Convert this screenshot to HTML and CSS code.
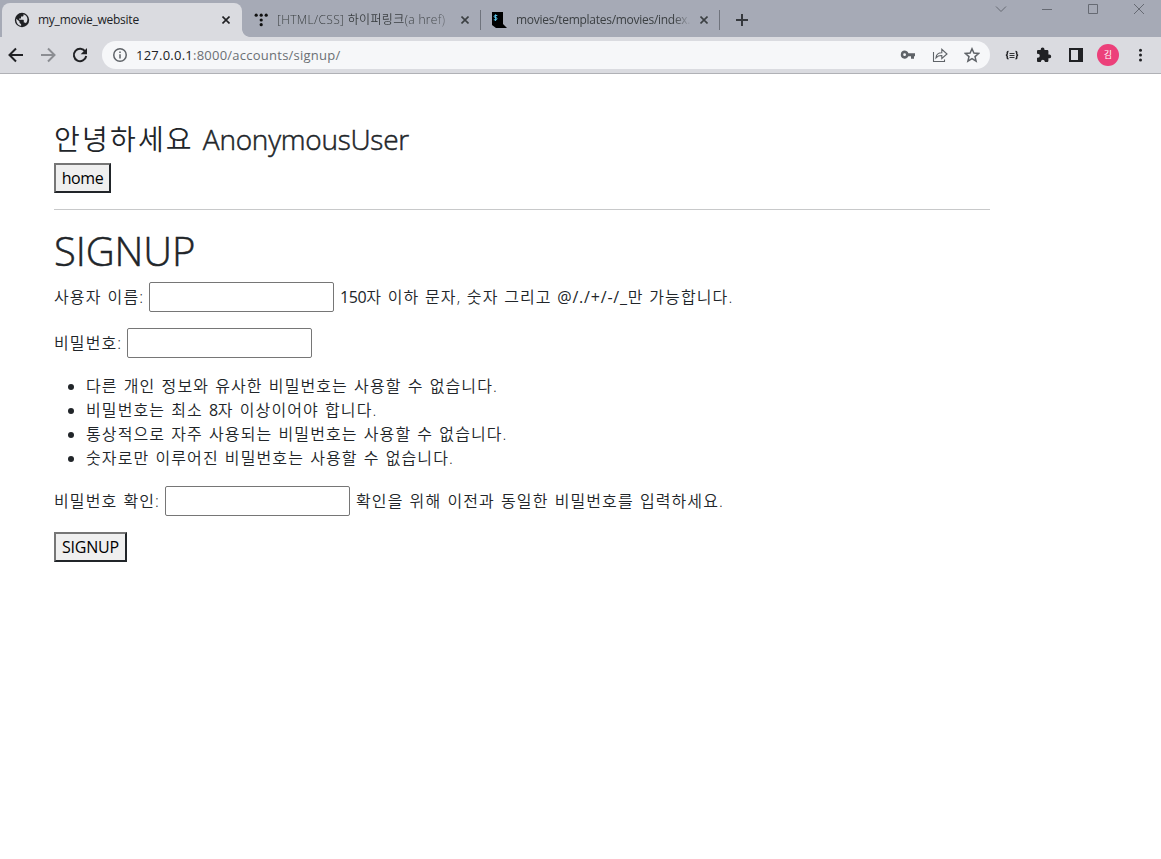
FILE: index.html
```
<!DOCTYPE html>
<html lang="ko">
<head>
<meta charset="utf-8">
<title>my_movie_website</title>
<link rel="stylesheet" href="styles.css">
</head>
<body>
<header class="browser">
  <div class="tabstrip">
    <div class="tab tab-active">
      <svg class="favicon" viewBox="0 0 16 16"><circle cx="8" cy="8" r="7.2" fill="#202124"/><path d="M2.3 6.8 5.5 9.6v1.1l1.6 1.5v1.7C4.1 13.500 2 11 2.300 6.800zM9.500 2.200v1.200c0 .7-.6 1.200-1.300 1.200H7v1.300c0 .4-.3.600-.6.600H5.200v1.300h3.900c.4 0 .7.300.7.700v1.900h.7c.6 0 1.100.4 1.300.9 2.700-2.900 2.200-7.700-2.300-9.100z" fill="#dadbe0"/></svg>
      <span class="tab-title">my_movie_website</span>
      <svg class="close" viewBox="0 0 8 8"><path d="M.5.5l7 7M7.500.5l-7 7"/></svg>
    </div>
    <div class="tab tab-second">
      <svg class="favicon" viewBox="0 0 16 16" fill="#111"><circle cx="2.200" cy="3.200" r="1.600"/><circle cx="7.200" cy="3.200" r="1.600"/><circle cx="12.200" cy="3.200" r="1.600"/><circle cx="7.200" cy="8" r="1.600"/><circle cx="7.200" cy="12.700" r="1.600"/></svg>
      <span class="tab-title fade title-ko">[HTML/CSS] 하이퍼링크(a href)</span>
      <svg class="close" viewBox="0 0 8 8"><path d="M.5.5l7 7M7.500.5l-7 7"/></svg>
    </div>
    <i class="divider"></i>
    <div class="tab tab-third">
      <svg class="favicon" viewBox="0 0 16 16"><path d="M1 0h11v12l4 4H5l-4-3z" fill="#000"/><path d="M6.300 3.500H4c-1.200 0-1.200 2 0 2h1c1.300 0 1.300 2.300 0 2.300H2.800M4.600 2.300v6.700" fill="none" stroke="#5cc3e8" stroke-width="1"/></svg>
      <span class="tab-title fade title-path">movies/templates/movies/index.</span>
      <svg class="close" viewBox="0 0 8 8"><path d="M.5.5l7 7M7.500.5l-7 7"/></svg>
    </div>
    <i class="divider"></i>
    <svg class="newtab" viewBox="0 0 12 12"><path d="M6 0v12M0 6h12"/></svg>
    <div class="window-controls">
      <svg viewBox="0 0 12 12"><path d="M1 3.500l5 5 5-5"/></svg>
      <svg viewBox="0 0 12 12"><path d="M1 6.500h10"/></svg>
      <svg viewBox="0 0 12 12"><path d="M1.500 1.500h9v9h-9z"/></svg>
      <svg viewBox="0 0 12 12"><path d="M1 1l10 10M11 1L1 11"/></svg>
    </div>
  </div>
  <div class="toolbar">
    <svg class="nav" viewBox="0 0 16 16"><path d="M15 8H2M8 1.500L1.500 8 8 14.500"/></svg>
    <svg class="nav nav-off" viewBox="0 0 16 16"><path d="M1 8h13M8 1.500L14.500 8 8 14.500"/></svg>
    <svg class="nav" viewBox="0 0 16 16"><path d="M13.300 4.600A6.200 6.200 0 1 0 14.200 9"/><path d="M15 1v6.300H8.700z" fill="#202124" stroke="none"/></svg>
    <div class="omnibox">
      <svg class="info" viewBox="0 0 14 14"><circle cx="7" cy="7" r="6.250"/><path d="M7 6.200v4.300M7 3.500v1.500"/></svg>
      <span class="url"><b>127.0.0.1</b>:8000/accounts/signup/</span>
      <svg class="action" viewBox="0 0 16 16"><path fill="#5f6368" fill-rule="evenodd" d="M4.600 3.600c1.700 0 3.200 1.100 3.800 2.700H15v3h-1v2.500h-3V9.300H8.400A4 4 0 1 1 4.600 3.600zm0 2.700a1.400 1.400 0 1 0 0 2.800 1.400 1.400 0 0 0 0-2.800z"/></svg>
      <svg class="action" viewBox="0 0 16 16"><path d="M1.500 5v9.500h11v-2M4 10.800c.3-3.500 2.200-5 5.800-5V2.300L15 7l-5.200 4.500V8.500C7 8.400 5.500 9.100 4 10.800z" fill="none" stroke="#5f6368" stroke-width="1.100"/></svg>
      <svg class="action" viewBox="0 0 16 16"><path d="M8 1.800l1.900 4.300 4.700.4-3.600 3.100 1.100 4.600L8 11.700l-4.100 2.500L5 9.600 1.400 6.500l4.700-.4z" fill="none" stroke="#5f6368" stroke-width="1.500"/></svg>
    </div>
    <div class="extensions">
      <svg viewBox="0 0 16 16"><path d="M4.500 4.500c-1.800 0-1.200 1.600-1.200 2.300S2.700 8 2 8.200c.7.100 1.300.3 1.300 1.200s-.6 2.300 1.200 2.300M11.500 4.500c1.800 0 1.200 1.600 1.200 2.300s.6 1.200 1.300 1.400c-.7.100-1.300.3-1.300 1.200s.6 2.300-1.200 2.300" stroke="#202124" stroke-width="1.400" fill="none"/><path d="M5.500 6.500h5M5.500 8.500h5M5.500 10.500h5" stroke="#202124" stroke-width=".9"/></svg>
      <svg viewBox="0 0 16 16"><path fill="#202124" d="M13.300 7.500h-.9V4.300c0-.8-.6-1.300-1.300-1.300H8.500V2.400a1.900 1.900 0 0 0-3.800 0V3H2.300C1.500 3 1 3.500 1 4.300v2.500h.8a2 2 0 0 1 0 4H1v2.900c0 .7.500 1.300 1.300 1.300h2.600v-.8a2 2 0 0 1 3.900 0v.8h2.300c.7 0 1.300-.6 1.300-1.300v-2.400h.9a1.900 1.900 0 0 0 0-3.800z"/></svg>
      <svg viewBox="0 0 16 16"><path d="M2 2h12v12H2z" fill="none" stroke="#202124" stroke-width="2"/><path d="M10 1h5v14h-5z" fill="#202124"/></svg>
      <span class="avatar">김</span>
      <svg viewBox="0 0 16 16" fill="#202124"><circle cx="8.500" cy="3.300" r="1.500"/><circle cx="8.500" cy="8" r="1.500"/><circle cx="8.500" cy="12.900" r="1.500"/></svg>
    </div>
  </div>
</header>
<main class="page">
  <h3 class="greeting"><span class="greeting-ko">안녕하세요</span> <span class="greeting-user">AnonymousUser</span></h3>
  <button class="btn btn-home">home</button>
  <hr class="rule">
  <h1 class="title">SIGNUP</h1>
  <form class="form">
    <p class="field"><label class="label label-name">사용자 이름:</label><input class="input"><span class="help-name"><span class="num">150</span>자 이하 문자, 숫자 그리고 <span class="symbols">@/./+/-/_</span>만 가능합니다.</span></p>
    <p class="field"><label class="label label-pw">비밀번호:</label><input class="input" type="password"></p>
    <ul class="rules">
      <li>다른 개인 정보와 유사한 비밀번호는 사용할 수 없습니다.</li>
      <li>비밀번호는 최소 <span class="num">8</span>자 이상이어야 합니다.</li>
      <li>통상적으로 자주 사용되는 비밀번호는 사용할 수 없습니다.</li>
      <li>숫자로만 이루어진 비밀번호는 사용할 수 없습니다.</li>
    </ul>
    <p class="field"><label class="label label-confirm">비밀번호 확인:</label><input class="input" type="password"><span>확인을 위해 이전과 동일한 비밀번호를 입력하세요.</span></p>
    <button class="btn btn-signup" type="button">SIGNUP</button>
  </form>
</main>
</body>
</html>
```
FILE: styles.css
```
* { box-sizing: border-box; }
body { margin: 0; background: #fff; color: #212529; font: 350 16px/24px "Open Sans", "Noto Sans CJK KR", sans-serif; overflow: hidden; }
svg { display: block; flex: none; }
.browser { height: 74px; background: #dadbe0; border-bottom: 1px solid #b0b1b6; font-size: 12px; font-weight: 400; }
.tabstrip { display: flex; height: 37px; background: #a6aab6; padding: 3px 0 0 2px; }
.tab { display: flex; align-items: center; height: 34px; padding-left: 12px; color: #3c4043; }
.tab-active { width: 240px; background: #dadbe0; border-radius: 8px 8px 0 0; color: #202124; padding-right: 12px; }
.tab-second { width: 238px; padding-right: 11px; background: radial-gradient(circle at 8px 0, #a6aab6 7.500px, #dadbe0 8.200px) 0 100% / 8px 8px no-repeat, #a6aab6; }
.tab-third { width: 238px; padding: 0 11px 0 10px; }
.favicon { width: 16px; height: 16px; margin-right: 8px; overflow: visible; }
.tab-second .favicon { margin-right: 7px; }
.tab-third .favicon { margin-right: 9px; }
.tab-title { flex: 1; min-width: 0; white-space: nowrap; line-height: 20px; letter-spacing: -.25px; }
.fade { margin-right: 14px; }
.title-ko { font-weight: 350; letter-spacing: .35px; -webkit-mask-image: linear-gradient(90deg, #000 90%, #0008); mask-image: linear-gradient(90deg, #000 90%, #0008); }
.title-path { margin-right: 9px; letter-spacing: -.28px; -webkit-mask-image: linear-gradient(90deg, #000 90%, transparent); mask-image: linear-gradient(90deg, #000 90%, transparent); }
.close { width: 8px; height: 8px; stroke: currentColor; stroke-width: 1.6; fill: none; }
.divider { width: 1px; height: 20px; margin-top: 7px; background: #70747d; }
.newtab { width: 12px; height: 12px; margin: 11px 0 0 16px; stroke: #36393e; stroke-width: 2; }
.window-controls { display: flex; gap: 34px; margin-left: auto; padding-right: 16px; }
.window-controls svg { width: 12px; height: 12px; stroke: #666a73; fill: none; }
.toolbar { display: flex; align-items: center; height: 36px; padding-left: 8px; }
.nav { width: 16px; height: 16px; margin-right: 16px; fill: none; stroke: #202124; stroke-width: 2; }
.nav-off { stroke: #8b8d92; }
.omnibox { display: flex; align-items: center; width: 888px; height: 28px; margin-left: -2px; padding: 0 10px 0 11px; border-radius: 14px; background: #f6f7f9; }
.info { width: 14px; height: 14px; margin-right: 9px; fill: none; stroke: #5f6368; stroke-width: 1.5; }
.url { margin-right: auto; font-size: 13px; letter-spacing: .24px; color: #6b6f74; }
.url b { font-weight: inherit; color: #202124; }
.action { width: 16px; height: 16px; margin-left: 16px; }
.extensions { display: flex; align-items: center; gap: 16px; margin-left: 14px; }
.extensions svg { width: 16px; height: 16px; }
.avatar { width: 22px; height: 22px; margin: 0 -3px; border-radius: 50%; background: #ec407a; color: #fff; font-size: 9px; line-height: 22px; text-align: center; }
.page { width: 990px; padding: 48px 0 0 54px; }
.greeting { height: 33px; margin: 0 0 8px; font-size: 28px; line-height: 35px; font-weight: 350; white-space: nowrap; letter-spacing: -.25px; }
.greeting-ko { letter-spacing: 2.2px; margin-right: 2px; }
.greeting-user, .title { -webkit-text-stroke: .5px #212529; }
.btn { display: block; height: 30px; padding: 0; border: 2px solid; border-color: #767676 #212529 #212529 #767676; background: #efefef; color: #000; font: 400 16px/24px "Open Sans", sans-serif; }
.btn-home { width: 57px; letter-spacing: -.4px; }
.rule { height: 1px; margin: 16px 0; border: 0; background: #c8c9ca; }
.title { margin: 0 0 8px; font-size: 40px; line-height: 50px; height: 48px; font-weight: 350; letter-spacing: -.1px; }
.form { letter-spacing: 1.1px; word-spacing: .9px; }
.field { display: flex; align-items: center; gap: 6px; height: 30px; margin: 0 0 16px; white-space: nowrap; }
.label-name { width: 89px; }
.label-pw { width: 67px; }
.label-confirm { width: 105px; }
.help-name { word-spacing: .4px; }
.num { font-weight: 400; letter-spacing: -.4px; }
.symbols { font-weight: 400; letter-spacing: .8px; }
.input { width: 185px; height: 30px; margin: 0; border: 1px solid #767676; border-radius: 2px; background: #fff; }
.rules { margin: 0 0 16px; padding-left: 32px; }
.btn-signup { width: 73px; letter-spacing: -.2px; }
```
